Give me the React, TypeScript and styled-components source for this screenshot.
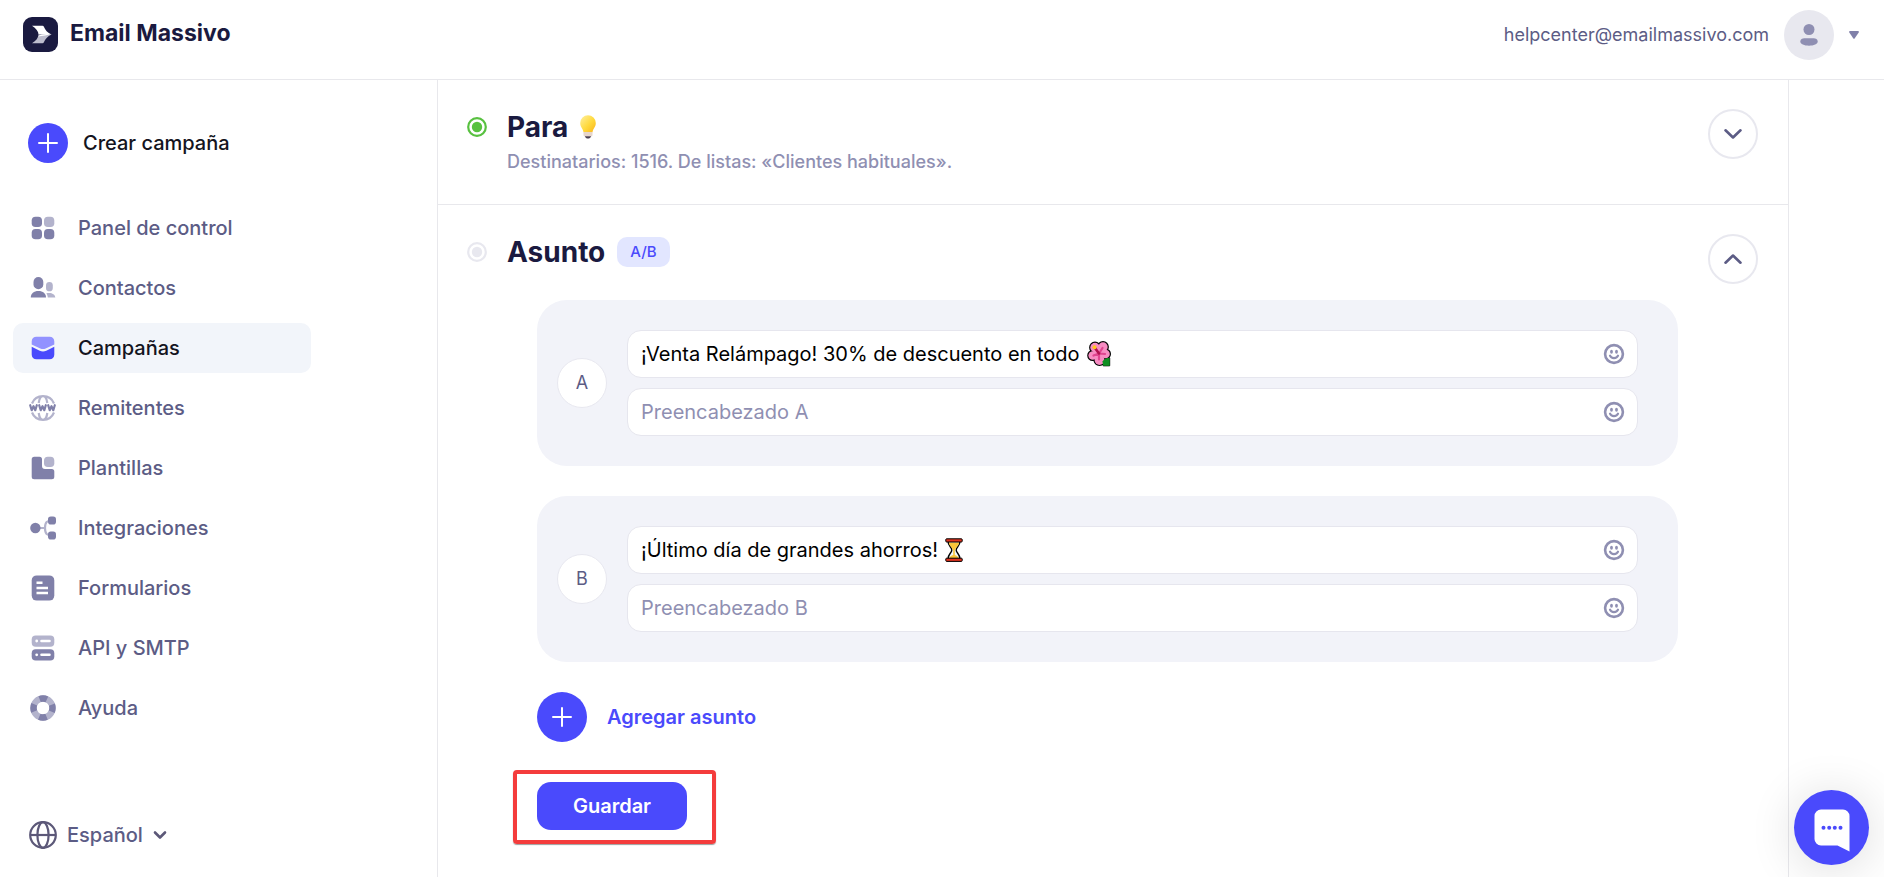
import React, { useState } from "react";
import styled, { createGlobalStyle, css } from "styled-components";

const c = {
  ink: "#1a1a40",
  black: "#141420",
  text: "#5c5c85",
  muted: "#8f8fb2",
  icon: "#8080a9",
  iconLight: "#b3b3cc",
  line: "#e8e8ec",
  brand: "#4a4afc",
  brandLight: "#9292ff",
  panel: "#f2f3f9",
  red: "#f43c3c",
};

const GlobalStyle = createGlobalStyle`
  *, *::before, *::after { box-sizing: border-box; }
  body {
    margin: 0;
    background: #fff;
    color: ${c.text};
    font-family: Inter, "Liberation Sans", sans-serif;
    font-size: 20px;
    line-height: 24px;
  }
  button, input, select { font: inherit; color: inherit; }
  button { border: 0; padding: 0; background: none; cursor: pointer; }
  a { color: inherit; text-decoration: none; }
  svg { display: block; flex: none; }
`;

const Page = styled.div`
  min-height: 100vh;
  display: flex;
  flex-direction: column;
`;

const Header = styled.header`
  height: 80px;
  padding: 0 25px 10px 23px;
  border-bottom: 1px solid ${c.line};
  display: flex;
  align-items: center;
  justify-content: space-between;
`;

const Brand = styled.a`
  display: flex;
  align-items: center;
  gap: 12px;
  color: ${c.ink};
  font-size: 23px;
  font-weight: 700;
`;

const BrandName = styled.span`
  padding-bottom: 3px;
`;

const Account = styled.button`
  display: flex;
  align-items: center;
  gap: 15px;
  font-size: 18px;
`;

const Avatar = styled.span`
  width: 50px;
  height: 50px;
  border-radius: 50%;
  background: #e8e8ef;
  display: grid;
  place-items: center;
`;

const Columns = styled.div`
  flex: 1;
  display: flex;
  padding-right: 95px;
`;

const Sidebar = styled.aside`
  flex: none;
  width: 438px;
  border-right: 1px solid ${c.line};
  padding: 43px 126px 0 13px;
  font-weight: 500;
`;

const CreateLink = styled.a`
  display: flex;
  align-items: center;
  gap: 15px;
  padding-left: 15px;
  color: ${c.black};
`;

const PlusCircle = styled.span<{ $size: number }>`
  width: ${(p) => p.$size}px;
  height: ${(p) => p.$size}px;
  border-radius: 50%;
  background: ${c.brand};
  display: grid;
  place-items: center;
`;

const Nav = styled.nav`
  display: flex;
  flex-direction: column;
  gap: 10px;
  margin-top: 40px;
`;

const NavLink = styled.a<{ $active?: boolean }>`
  height: 50px;
  border-radius: 10px;
  padding-left: 15px;
  display: flex;
  align-items: center;
  gap: 20px;
  ${(p) =>
    p.$active &&
    css`
      background: #f2f5fa;
      color: ${c.black};
    `}
`;

const Language = styled.button`
  display: flex;
  align-items: center;
  gap: 10px;
  margin: 88px 0 0 16px;
  padding-bottom: 28px;
`;

const Main = styled.main`
  flex: 1;
  min-width: 0;
  border-right: 1px solid ${c.line};
`;

const Section = styled.section<{ $divided?: boolean }>`
  display: grid;
  grid-template-columns: 20px minmax(0, 1fr) 50px;
  padding: 29px 30px 30px 29px;
  border-bottom: ${(p) => (p.$divided ? `1px solid ${c.line}` : "0")};
`;

const Status = styled.span`
  height: 36px;
  display: flex;
  align-items: center;
`;

const Content = styled.div`
  margin: 0 30px 0 20px;
`;

const TitleRow = styled.div`
  height: 36px;
  display: flex;
  align-items: center;
  gap: 12px;
`;

const Title = styled.h2`
  margin: 0;
  color: ${c.ink};
  font-size: 28px;
  font-weight: 700;
  line-height: 36px;
`;

const Badge = styled.span`
  height: 30px;
  padding: 0 13px;
  border-radius: 10px;
  background: #e2e6ff;
  color: ${c.brand};
  font-size: 15px;
  font-weight: 500;
  line-height: 30px;
`;

const Summary = styled.p`
  margin: 5px 0 0;
  color: ${c.muted};
  font-size: 18px;
  font-weight: 500;
`;

const Toggle = styled.button`
  width: 50px;
  height: 50px;
  border: 2px solid #e8e8ef;
  border-radius: 50%;
  display: grid;
  place-items: center;
`;

const Variants = styled.div`
  display: flex;
  flex-direction: column;
  align-items: stretch;
  gap: 30px;
  margin-top: 30px;
  padding-left: 30px;
`;

const Variant = styled.div`
  display: flex;
  align-items: center;
  gap: 20px;
  padding: 30px 40px 30px 20px;
  border-radius: 30px;
  background: ${c.panel};
`;

const Letter = styled.span`
  flex: none;
  width: 50px;
  height: 50px;
  border: 1px solid #e8e8f0;
  border-radius: 50%;
  background: #fff;
  font-size: 18px;
  line-height: 48px;
  text-align: center;
`;

const Fields = styled.div`
  flex: 1;
  display: flex;
  flex-direction: column;
  gap: 10px;
`;

const Field = styled.div`
  height: 48px;
  display: flex;
  align-items: center;
  gap: 7px;
  padding: 0 12px 0 13px;
  border: 1px solid #e6e6ee;
  border-radius: 14px;
  background: #fff;
`;

const TextInput = styled.input<{ $fit?: boolean }>`
  flex: ${(p) => (p.$fit ? "0 1 auto" : "1")};
  field-sizing: ${(p) => (p.$fit ? "content" : "fixed")};
  min-width: 0;
  padding: 0;
  border: 0;
  outline: 0;
  background: none;
  color: #000;
  &::placeholder {
    color: ${c.muted};
    opacity: 1;
  }
`;

const EmojiButton = styled.button`
  margin-left: auto;
`;

const AddButton = styled.button`
  align-self: flex-start;
  display: flex;
  align-items: center;
  gap: 20px;
  color: ${c.brand};
  font-weight: 600;
`;

const SaveArea = styled.div`
  position: relative;
  align-self: flex-start;
  margin-top: 10px;
  &::after {
    content: "";
    position: absolute;
    inset: -12px -29px -14px -24px;
    border: 4px solid ${c.red};
    border-radius: 4px;
    box-shadow: 0 1px 1px rgba(60, 60, 60, 0.5);
    pointer-events: none;
  }
`;

const SaveButton = styled.button`
  width: 150px;
  height: 48px;
  border-radius: 14px;
  background: ${c.brand};
  color: #fff;
  font-weight: 600;
`;

const Chat = styled.button`
  position: fixed;
  right: 15px;
  bottom: 12px;
  width: 75px;
  height: 75px;
  border-radius: 50%;
  background: ${c.brand};
  display: grid;
  place-items: center;
  box-shadow: 0 4px 48px rgba(0, 0, 0, 0.14);
`;

const LogoMark = () => (
  <svg width="35" height="35" viewBox="0 0 35 35" aria-hidden="true">
    <rect width="35" height="35" rx="9" fill={c.ink} />
    <path d="M9 8.700h10.500q1 0 1.500 1.200c1 2.800 3.500 5.800 7.500 7.600H15.500c0-3.200-2.500-6.300-6.500-8.800Z" fill="#fff" />
    <path d="M15.500 17.500h13c-4 1.800-6.500 4.800-7.500 7.600q-.5 1.200-1.500 1.200H9c4-2.500 6.500-5.600 6.500-8.800Z" fill="#bdbdcd" />
    <path d="M15 19.500c3-2.500 8-3 13.500-2-3 .2-9 1.500-13.500 2Z" fill="#fff" />
  </svg>
);

const Plus = () => (
  <svg width="20" height="20" viewBox="0 0 20 20" stroke="#fff" strokeWidth="2" strokeLinecap="round" aria-hidden="true">
    <path d="M10 1v18M1 10h18" />
  </svg>
);

const Chevron = ({ up }: { up?: boolean }) => (
  <svg width="18" height="18" viewBox="0 0 18 18" fill="none" stroke={c.text} strokeWidth="2.600" strokeLinecap="round" strokeLinejoin="round" aria-hidden="true">
    <path d={up ? "M1.500 12.700 9 5.500l7.500 7.200" : "M1.500 5.300 9 12.500l7.500-7.200"} />
  </svg>
);

const Dot = ({ color }: { color: string }) => (
  <svg width="20" height="20" viewBox="0 0 20 20" aria-hidden="true">
    <circle cx="10" cy="10" r="8.800" fill="none" stroke={color} strokeWidth="2.200" />
    <circle cx="10" cy="10" r="5.200" fill={color} />
  </svg>
);

const Smile = () => (
  <svg width="22" height="22" viewBox="0 0 22 22" fill="none" stroke={c.muted} strokeLinecap="round" aria-hidden="true">
    <circle cx="11" cy="11" r="8.900" strokeWidth="2.600" />
    <path d="M7 12.700c1.200 3.200 6.800 3.200 8 0" strokeWidth="2.200" />
    <ellipse cx="8.500" cy="8.800" rx="1.400" ry="2" fill={c.muted} stroke="none" />
    <ellipse cx="13.500" cy="8.800" rx="1.400" ry="2" fill={c.muted} stroke="none" />
  </svg>
);

const Bulb = () => (
  <svg width="16" height="24" viewBox="0 0 16 24" role="img" aria-label="Bombilla">
    <defs>
      <linearGradient id="bulb" x1="0" y1="0" x2="1" y2="1">
        <stop offset="0" stopColor="#fff0a0" />
        <stop offset=".55" stopColor="#ffd93c" />
        <stop offset="1" stopColor="#f9b41c" />
      </linearGradient>
    </defs>
    <path d="M8 .3a7.800 7.800 0 0 1 7.800 7.800c0 4.200-2.800 5.500-3.300 9.200h-9C3 13.600.2 12.300.2 8.100A7.800 7.800 0 0 1 8 .3Z" fill="url(#bulb)" />
    <path d="M3.500 17h9v3c0 .8-.6 1.300-1.400 1.300H4.900c-.8 0-1.400-.5-1.400-1.300Z" fill="#e6d5cb" />
    <path d="M4.800 21.300h6.400c-.6 1.600-1.800 2.300-3.200 2.300s-2.600-.7-3.200-2.300Z" fill="#4d4152" />
  </svg>
);

const petals = (
  <>
    <circle cx="8" cy="6.500" r="4.700" />
    <circle cx="16" cy="6" r="4.700" />
    <circle cx="18.500" cy="13" r="4.300" />
    <circle cx="12.500" cy="19" r="4.900" />
    <circle cx="5.700" cy="14.500" r="4.300" />
  </>
);

const Flower = () => (
  <svg width="24" height="26" viewBox="0 0 24 26" role="img" aria-label="Hibisco">
    <g fill="#000" stroke="#000" strokeWidth="2.400">{petals}</g>
    <path d="M15.500 20.500c1.500-2.500 4-3.800 7.200-3.500v7.800h-6.500Z" fill="#0f8f22" stroke="#000" strokeWidth="1" strokeLinejoin="round" />
    <g fill="#f78cc2">
      {petals}
      <circle cx="12" cy="12.500" r="6" />
    </g>
    <path d="M15.500 20.500c1.500-2.500 4-3.800 7.200-3.500v7.800h-6.500Z" fill="#0f8f22" />
    <path d="M12 12.500 15.500 7M12 12.500l6 .5M12 12.500v6M12 12.500l-5.500 2" stroke="#e0458f" strokeWidth="2.200" strokeLinecap="round" />
    <path d="M8 7 12 12.500" stroke="#b0124f" strokeWidth="2.600" strokeLinecap="round" />
    <circle cx="7.500" cy="6.300" r="2" fill="#ffc61c" />
  </svg>
);

const Hourglass = () => (
  <svg width="18" height="24" viewBox="0 0 18 24" role="img" aria-label="Reloj de arena">
    <path d="M3 3c0 5 3.800 6 3.800 9S3 16 3 21h12c0-5-3.800-6-3.800-9S15 8 15 3Z" fill="#eef6f8" stroke="#000" strokeWidth="1.400" />
    <path d="M3.800 4.500h10.400c-.4 3.500-3.300 4.800-4 7.500h-.4v5c2 .8 3.500 1.500 4 3.500H4.200c.5-2 2-2.700 4-3.500v-5h-.4c-.7-2.700-3.600-4-4-7.500Z" fill="#fbc63a" />
    <rect x=".8" y=".8" width="16.400" height="3.200" rx=".8" fill="#e0331f" stroke="#000" strokeWidth="1" />
    <rect x=".8" y="20.200" width="16.400" height="3.200" rx=".8" fill="#e0331f" stroke="#000" strokeWidth="1" />
  </svg>
);

const NavIcon = ({ children }: { children: React.ReactNode }) => (
  <svg width="30" height="30" viewBox="0 0 30 30" fill="none" aria-hidden="true">{children}</svg>
);

const items: { label: string; active?: boolean; icon: React.ReactNode }[] = [
  {
    label: "Panel de control",
    icon: (
      <>
        <rect x="3.700" y="3.700" width="10.300" height="10.300" rx="3.800" fill={c.icon} />
        <rect x="16" y="3.700" width="10.300" height="10.300" rx="3.800" fill={c.iconLight} />
        <rect x="3.700" y="16" width="10.300" height="10.300" rx="3.800" fill={c.icon} />
        <rect x="16" y="16" width="10.300" height="10.300" rx="3.800" fill={c.icon} />
      </>
    ),
  },
  {
    label: "Contactos",
    icon: (
      <>
        <rect x="5.500" y="4" width="9.800" height="12.300" rx="4.900" fill={c.icon} />
        <path d="M2.800 24.500c0-4 3-6.500 7.600-6.500s7.600 2.500 7.600 6.500Z" fill={c.icon} />
        <rect x="18" y="9" width="6.800" height="9.300" rx="3.400" fill={c.iconLight} />
        <path d="M18.300 20.200c4.500-1 8.700.3 9 4.300h-7.500c-.2-1.700-.6-3.200-1.500-4.300Z" fill={c.iconLight} />
      </>
    ),
  },
  {
    label: "Campañas",
    active: true,
    icon: (
      <>
        <path d="M3.700 8.500c0-2.900 1.900-4.800 4.800-4.800h13c2.900 0 4.800 1.900 4.800 4.800v3l-8.600 4c-1.800.8-3.600.8-5.400 0l-8.600-4Z" fill={c.brandLight} />
        <path d="m3.700 13.800 8 4c2.100 1 4.500 1 6.600 0l8-4v7.700c0 2.900-1.900 4.800-4.800 4.800h-13c-2.900 0-4.800-1.900-4.800-4.800Z" fill={c.brand} />
      </>
    ),
  },
  {
    label: "Remitentes",
    icon: (
      <>
        <path d="M4 10.500C6 5.500 10 3.200 15 3.200s9 2.300 11 7.300M4 19.500c2 5 6 7.300 11 7.300s9-2.300 11-7.300M10.700 10c.6-4.500 2.300-6.800 4.300-6.800s3.700 2.300 4.300 6.800M10.700 20c.6 4.500 2.300 6.800 4.300 6.800s3.700-2.300 4.300-6.800" stroke={c.iconLight} strokeWidth="2.200" />
        <path d="m2.200 12.200 1.500 5 1.800-4 1.800 4 1.500-5m2.400 0 1.500 5 1.800-4 1.800 4 1.500-5m2.400 0 1.500 5 1.800-4 1.800 4 1.500-5" stroke={c.icon} strokeWidth="2.200" strokeLinecap="round" strokeLinejoin="round" />
      </>
    ),
  },
  {
    label: "Plantillas",
    icon: (
      <>
        <path d="M6.200 3.700h5.300a2.500 2.500 0 0 1 2.500 2.500V13a3 3 0 0 0 3 3h6.800a2.500 2.500 0 0 1 2.500 2.500v5.300a2.500 2.500 0 0 1-2.500 2.500H6.200a2.500 2.500 0 0 1-2.500-2.500V6.200a2.500 2.500 0 0 1 2.500-2.500Z" fill={c.icon} />
        <rect x="16" y="3.700" width="10.300" height="10.300" rx="3.800" fill={c.iconLight} />
      </>
    ),
  },
  {
    label: "Integraciones",
    icon: (
      <>
        <path d="M24 7.500c-5 0-7 1.500-7 7.500s2 7.500 7 7.500M11 15h6" stroke={c.iconLight} strokeWidth="2.200" />
        <circle cx="7.400" cy="15" r="5.200" fill={c.icon} />
        <rect x="20" y="3.500" width="8" height="8" rx="2.800" fill={c.icon} />
        <rect x="20" y="18.500" width="8" height="8" rx="2.800" fill={c.icon} />
      </>
    ),
  },
  {
    label: "Formularios",
    icon: (
      <>
        <rect x="3.700" y="2.400" width="22.600" height="25.200" rx="5" fill={c.icon} />
        <path d="M8.500 9.700h6M8.500 15h11.500M8.500 20h11.500" stroke="#fff" strokeWidth="2.400" />
      </>
    ),
  },
  {
    label: "API y SMTP",
    icon: (
      <>
        <rect x="3.700" y="2.400" width="22.600" height="11.300" rx="4" fill={c.iconLight} />
        <rect x="3.700" y="16.300" width="22.600" height="11.300" rx="4" fill={c.icon} />
        <path d="M13.500 8h8M13.500 21.800h8" stroke="#fff" strokeWidth="2.600" strokeLinecap="round" />
        <circle cx="8.700" cy="8" r="1.400" fill="#fff" />
        <circle cx="8.700" cy="21.800" r="1.400" fill="#fff" />
      </>
    ),
  },
  {
    label: "Ayuda",
    icon: (
      <>
        <circle cx="15" cy="15" r="9.500" stroke={c.iconLight} strokeWidth="6.400" />
        <circle cx="15" cy="15" r="9.500" stroke={c.icon} strokeWidth="6.400" strokeDasharray="7.460 7.460" strokeDashoffset="3.730" />
      </>
    ),
  },
];

const variants = [
  { id: "A", subject: "¡Venta Relámpago! 30% de descuento en todo", emoji: <Flower /> },
  { id: "B", subject: "¡Último día de grandes ahorros!", emoji: <Hourglass /> },
];

export default function App() {
  const [subjects, setSubjects] = useState(variants.map((v) => v.subject));

  return (
    <Page>
      <GlobalStyle />
      <Header>
        <Brand href="#">
          <LogoMark />
          <BrandName>Email Massivo</BrandName>
        </Brand>
        <Account type="button">
          helpcenter@emailmassivo.com
          <Avatar>
            <svg width="18" height="22" viewBox="0 0 18 22" fill={c.muted} aria-hidden="true">
              <circle cx="9" cy="5.500" r="5.500" />
              <path d="M.3 17.500c0-2.300 2-3.300 4-3.300h9.400c2 0 4 1 4 3.300 0 2.500-4 4.200-8.700 4.200S.3 20 .3 17.500Z" />
            </svg>
          </Avatar>
          <svg width="10" height="8" viewBox="0 0 10 8" fill={c.icon} aria-hidden="true">
            <path d="M1 0h8q1.300.3.700 1.500L5.800 7.300q-.8 1-1.600 0L.3 1.500Q-.3.300 1 0Z" />
          </svg>
        </Account>
      </Header>
      <Columns>
        <Sidebar>
          <CreateLink href="#">
            <PlusCircle $size={40}><Plus /></PlusCircle>
            Crear campaña
          </CreateLink>
          <Nav>
            {items.map((item) => (
              <NavLink href="#" key={item.label} $active={item.active} aria-current={item.active ? "page" : undefined}>
                <NavIcon>{item.icon}</NavIcon>
                {item.label}
              </NavLink>
            ))}
          </Nav>
          <Language type="button">
            <svg width="28" height="28" viewBox="0 0 28 28" fill="none" stroke="#5c5878" strokeWidth="2.200" aria-hidden="true">
              <circle cx="14" cy="14" r="12.800" />
              <ellipse cx="14" cy="14" rx="5.600" ry="12.800" />
              <path d="M1 14h26" />
            </svg>
            Español
            <svg width="14" height="10" viewBox="0 0 14 10" fill="none" stroke="#5c5878" strokeWidth="2.600" strokeLinecap="round" strokeLinejoin="round" aria-hidden="true">
              <path d="m2 2.500 5 5 5-5" />
            </svg>
          </Language>
        </Sidebar>
        <Main>
          <Section $divided>
            <Status><Dot color="#58c140" /></Status>
            <Content>
              <TitleRow>
                <Title>Para</Title>
                <Bulb />
              </TitleRow>
              <Summary>Destinatarios: 1516. De listas: «Clientes habituales».</Summary>
            </Content>
            <Toggle type="button" aria-label="Abrir Para" aria-expanded="false"><Chevron /></Toggle>
          </Section>
          <Section>
            <Status><Dot color="#e8e8ef" /></Status>
            <Content>
              <TitleRow>
                <Title>Asunto</Title>
                <Badge>A/B</Badge>
              </TitleRow>
              <Variants>
                {variants.map((v, i) => (
                  <Variant key={v.id}>
                    <Letter>{v.id}</Letter>
                    <Fields>
                      <Field>
                        <TextInput
                          $fit
                          aria-label={`Asunto ${v.id}`}
                          value={subjects[i]}
                          onChange={(e) => setSubjects(subjects.map((s, j) => (j === i ? e.target.value : s)))}
                        />
                        {v.emoji}
                        <EmojiButton type="button" aria-label="Insertar emoji"><Smile /></EmojiButton>
                      </Field>
                      <Field>
                        <TextInput aria-label={`Preencabezado ${v.id}`} placeholder={`Preencabezado ${v.id}`} />
                        <EmojiButton type="button" aria-label="Insertar emoji"><Smile /></EmojiButton>
                      </Field>
                    </Fields>
                  </Variant>
                ))}
                <AddButton type="button">
                  <PlusCircle $size={50}><Plus /></PlusCircle>
                  Agregar asunto
                </AddButton>
                <SaveArea>
                  <SaveButton type="button">Guardar</SaveButton>
                </SaveArea>
              </Variants>
            </Content>
            <Toggle type="button" aria-label="Cerrar Asunto" aria-expanded="true"><Chevron up /></Toggle>
          </Section>
        </Main>
      </Columns>
      <Chat type="button" aria-label="Abrir chat">
        <svg width="36" height="48" viewBox="0 -5 36 48" aria-hidden="true">
          <path d="M7 .5h22a6.500 6.500 0 0 1 6.500 6.500v35.500L23.500 36.500H7A6.500 6.500 0 0 1 .5 30V7A6.500 6.500 0 0 1 7 .5Z" fill="#fff" />
          <g fill={c.brand}>
            <circle cx="9.500" cy="18.700" r="2" /><circle cx="15.200" cy="18.700" r="2" /><circle cx="20.800" cy="18.700" r="2" /><circle cx="26.500" cy="18.700" r="2" />
          </g>
        </svg>
      </Chat>
    </Page>
  );
}
